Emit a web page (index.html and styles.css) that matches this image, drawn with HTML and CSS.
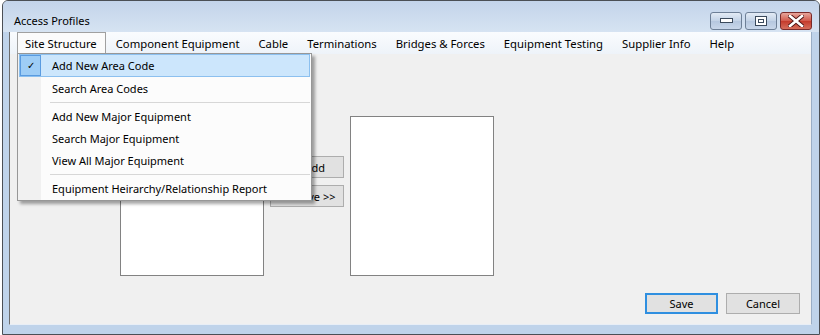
FILE: index.html
```html
<!DOCTYPE html>
<html lang="en">
<head>
    <meta charset="UTF-8">
    <title>Access Profiles</title>
    <link rel="stylesheet" href="styles.css">
</head>
<body>
    <div class="window">
        <div class="titlebar">
            <span class="title">Access Profiles</span>
            <div class="caption-buttons">
                <div class="cap-btn">
                    <svg width="13" height="6" viewBox="0 0 13 6"><rect x="0.5" y="0.5" width="12" height="4" fill="#fff" stroke="#3b4a5c"/></svg>
                </div>
                <div class="cap-btn">
                    <svg width="12" height="10" viewBox="0 0 12 10"><rect x="0.5" y="0.5" width="11" height="9" fill="#fff" stroke="#3b4a5c"/><rect x="3.5" y="3.5" width="5" height="3" fill="none" stroke="#3b4a5c"/></svg>
                </div>
                <div class="cap-btn close">
                    <svg width="16" height="12" viewBox="0 0 16 12"><path d="M2 1 L14 11 M14 1 L2 11" stroke="#4a1010" stroke-width="4.4" stroke-linecap="square"/><path d="M2 1 L14 11 M14 1 L2 11" stroke="#fff" stroke-width="2.6" stroke-linecap="square"/></svg>
                </div>
            </div>
        </div>
        <div class="client">
            <div class="menubar">
                <div class="menu-item open">
                    Site Structure
                    <div class="dropdown">
                        <div class="drop-item checked">
                            <span class="check">&#10003;</span>
                            Add New Area Code
                        </div>
                        <div class="drop-item">Search Area Codes</div>
                        <div class="separator"></div>
                        <div class="drop-item">Add New Major Equipment</div>
                        <div class="drop-item">Search Major Equipment</div>
                        <div class="drop-item">View All Major Equipment</div>
                        <div class="separator"></div>
                        <div class="drop-item">Equipment Heirarchy/Relationship Report</div>
                    </div>
                </div>
                <div class="menu-item">Component Equipment</div>
                <div class="menu-item">Cable</div>
                <div class="menu-item">Terminations</div>
                <div class="menu-item">Bridges &amp; Forces</div>
                <div class="menu-item">Equipment Testing</div>
                <div class="menu-item">Supplier Info</div>
                <div class="menu-item">Help</div>
            </div>
            <div class="content">
                <div class="lists">
                    <div class="listbox"></div>
                    <div class="move-buttons">
                        <button class="btn">&lt;&lt; Add</button>
                        <button class="btn">Remove &gt;&gt;</button>
                    </div>
                    <div class="listbox"></div>
                </div>
                <div class="footer">
                    <button class="btn default">Save</button>
                    <button class="btn cancel">Cancel</button>
                </div>
            </div>
        </div>
    </div>
</body>
</html>
```

FILE: styles.css
```css
* {
    box-sizing: border-box;
}
body {
    margin: 0;
    background: #fff;
    font-family: "Noto Sans", "Open Sans", sans-serif;
    font-size: 11px;
    color: #000;
}
.window {
    margin-left: 2px;
    width: 818px;
    height: 335px;
    border: 1px solid #4b4f55;
    border-radius: 6px 6px 0 0;
    background: #bfd3ea;
    padding: 0 7px 9px 6px;
    display: flex;
    flex-direction: column;
}
.titlebar {
    height: 31px;
    display: flex;
    align-items: flex-start;
    justify-content: space-between;
    background: linear-gradient(#c3d4ea, #d6e3f2);
    margin: 0 -7px 0 -6px;
    padding: 0 7px 0 11px;
    border-radius: 5px 5px 0 0;
}
.title {
    margin-top: 12px;
    font-size: 11px;
    color: #000;
}
.caption-buttons {
    display: flex;
    gap: 3px;
    margin-top: 11px;
}
.cap-btn {
    width: 32px;
    height: 18px;
    border: 1px solid #6d7f96;
    border-radius: 3px;
    background: linear-gradient(#e3ebf5, #c2d2e6 50%, #b5c7df 51%, #c9d7ea);
    display: flex;
    align-items: center;
    justify-content: center;
}
.cap-btn.close {
    border-color: #7a2a2a;
    background: linear-gradient(#e7a59b, #d1584a 50%, #c43a2b 51%, #d56e5c);
}
.client {
    flex: 1;
    border-left: 1px solid #6c6c6c;
    border-right: 1px solid #9aaec6;
    border-bottom: 1px solid #e8eef6;
    background: #f0f0f0;
    display: flex;
    flex-direction: column;
}
.menubar {
    height: 22px;
    display: flex;
    align-items: stretch;
    padding: 0 0 0 7px;
    background: linear-gradient(#fafcfe, #eef3f9);
}
.menu-item {
    position: relative;
    padding: 3px 8px 0 9px;
    border: 1px solid transparent;
    border-bottom: none;
    font-size: 11.3px;
    line-height: 16px;
    white-space: nowrap;
}
.menu-item.open {
    padding-left: 7px;
    background: #fbfbfb;
    border-color: #a0a0a0;
}
.dropdown {
    position: absolute;
    top: 20px;
    left: -1px;
    width: 295px;
    padding: 0 1px 1px 1px;
    font-size: 11px;
    background: linear-gradient(to right, #f1f1f1 0px, #f1f1f1 23px, #fcfcfc 23px);
    border: 1px solid #979797;
    box-shadow: 3px 3px 3px rgba(0, 0, 0, 0.35);
    z-index: 10;
}
.drop-item {
    position: relative;
    height: 22px;
    line-height: 21px;
    padding-left: 32px;
    border: 1px solid transparent;
}
.drop-item.checked {
    height: 23px;
    background: #cce6fc;
    border-color: #8cc0ef;
}
.check {
    position: absolute;
    left: 0;
    top: 0;
    width: 21px;
    height: 21px;
    background: #9ecdf6;
    border: 1px solid #5a9be0;
    font-size: 10px;
    line-height: 19px;
    text-align: center;
}
.separator {
    height: 1px;
    background: #d7d7d7;
    margin: 3px 0 2px 31px;
}
.content {
    flex: 1;
    display: flex;
    flex-direction: column;
    padding: 62px 11px 10px 110px;
}
.lists {
    display: flex;
    align-items: flex-start;
}
.listbox {
    width: 144px;
    height: 160px;
    background: #fff;
    border: 1px solid #828282;
}
.move-buttons {
    display: flex;
    flex-direction: column;
    gap: 7px;
    margin: 40px 6px 0 6px;
}
.btn {
    width: 74px;
    height: 22px;
    padding: 0;
    font-family: inherit;
    font-size: 11px;
    color: #000;
    background: #e1e1e1;
    border: 1px solid #adadad;
}
.footer {
    margin-top: auto;
    display: flex;
    justify-content: flex-end;
    gap: 8px;
}
.footer .btn {
    height: 21px;
}
.btn.default {
    width: 73px;
    border: 2px solid #2f8fe0;
}
```
